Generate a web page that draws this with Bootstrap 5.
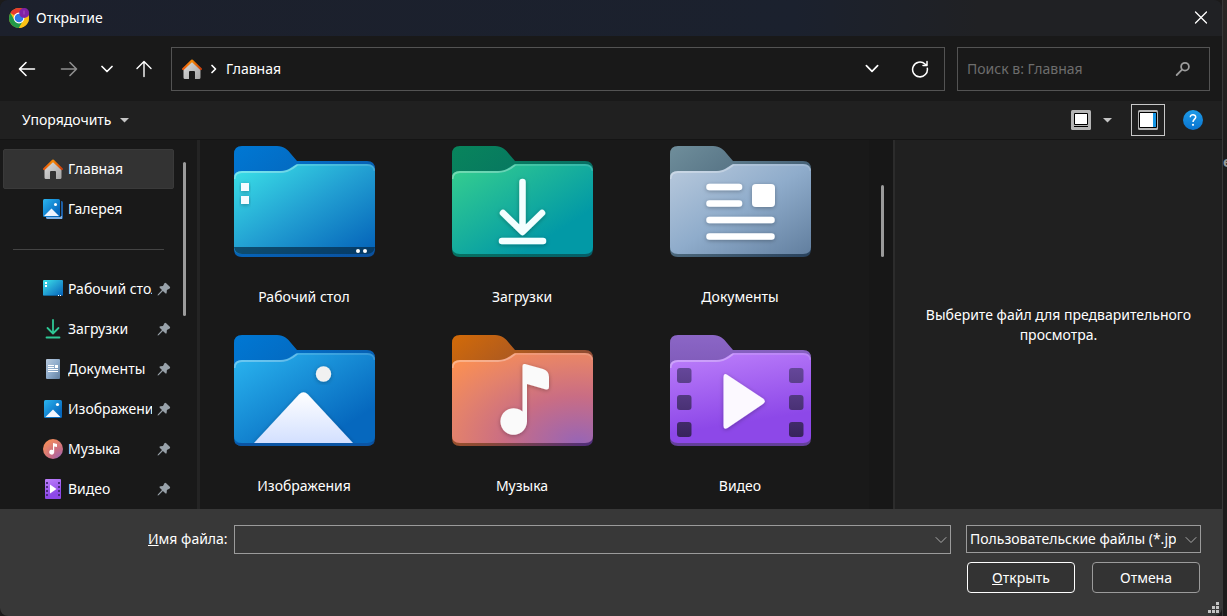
<!DOCTYPE html>
<html lang="ru" data-bs-theme="dark">
<head>
<meta charset="utf-8">
<meta name="viewport" content="width=device-width, initial-scale=1">
<title>Открытие</title>
<link href="https://cdn.jsdelivr.net/npm/bootstrap@5.3.0/dist/css/bootstrap.min.css" rel="stylesheet">
<style>
  body { font-family: "Noto Sans", "Open Sans", sans-serif; font-size: 14px; line-height: 20px; color: #fff; background: #1c1b1b; }
  button { color: inherit; }
  svg { display: block; flex: none; }
  .stroke { fill: none; stroke: currentColor; stroke-linecap: round; stroke-linejoin: round; }
  .dialog { background: #191919; border-radius: 8px; overflow: hidden; }
  .behind { width: 5px; border-left: 1px solid #383838; background: linear-gradient(#292625, #1c1b1b 160px); padding-top: 152px; font-weight: 700; color: #999; overflow: hidden; }
  .titlebar { height: 36px; padding: 0 12px 0 9px; gap: 7px; background: linear-gradient(90deg, #1c202c, #1b212e 65%, #202124 80%); }
  .plain { background: none; border: 0; padding: 0; line-height: inherit; }
  .navrow { height: 65px; padding: 0 12px 0 17px; gap: 22px; }
  .fields { gap: 12px; margin-left: -4px; }
  .field-box { height: 44px; border: 1px solid #535353; }
  .address { padding: 0 15px 0 10px; gap: 8px; }
  .search { width: 253px; padding: 0 18px 0 9px; }
  .search input { background: none; border: 0; outline: 0; width: 100%; padding: 0; color: #fff; }
  .search input::placeholder { color: #6d6d6d; opacity: 1; }
  .tools { height: 38px; background: #202020; padding: 0 19px 0 22px; }
  .view-btn { gap: 12px; margin-right: 19px; }
  .toggle { width: 34px; height: 32px; border: 1px solid #c8c8c8; margin-right: 18px; }
  .panes { border-top: 1px solid #141414; }
  .side { width: 200px; border-right: 3px solid #242424; padding: 9px 0 0 3px; }
  .side .thumb { height: 154px; margin: 13px 0 0 9px; }
  .places { width: 171px; }
  .place { height: 40px; padding: 0 3px 0 40px; gap: 5px; color: #fff; text-decoration: none; }
  .place.current { background: #333; border: 1px solid #3a3a3a; border-radius: 2px; padding-left: 39px; }
  .place span { flex: 1; min-width: 0; overflow: hidden; white-space: nowrap; }
  .divide { height: 40px; padding: 0 10px; }
  .divide hr { margin: 0; border-color: #444; opacity: 1; }
  .thumb { width: 3px; border-radius: 2px; background: #9b9b9b; }
  .tiles { display: grid; grid-template-columns: repeat(3, 1fr); gap: 0 18px; padding: 6px 29px 0 4px; }
  .tile { height: 189px; color: #fff; text-decoration: none; gap: 30px; }
  .tile svg { width: 141px; height: 111px; }
  .rail { width: 24px; padding: 45px 0 0 12px; background: #171717; }
  .rail .thumb { height: 72px; }
  .preview { width: 329px; background: #202020; border-left: 2px solid #2c2c2c; padding: 0 20px; }
  .bottom { height: 107px; background: #383838; padding: 16px 22px 0 148px; }
  .bottom .name-row { margin-right: -1px; }
  .name-row label { margin-right: 6px; }
  .entry { height: 29px; }
  .entry input, .entry select { width: 100%; height: 100%; background: #383838; color: #fff; border: 1px solid #9b9b9b; border-radius: 0; outline: 0; appearance: none; padding: 0 24px 0 3px; }
  .entry select { background: #333; height: 28px; }
  .entry svg { position: absolute; right: 4px; top: 11px; color: #aaa; pointer-events: none; }
  .kinds { width: 235px; margin-left: 15px; }
  .actions { gap: 17px; padding-top: 8px; }
  .dlg-btn { width: 108px; height: 31px; padding: 0; border: 1px solid #9b9b9b; border-radius: 4px; background: #333; }
  .dlg-btn.main { border-color: #fff; }
  .grip { position: absolute; right: 3px; bottom: 3px; }
</style>
</head>
<body>
<svg width="0" height="0" class="position-absolute" aria-hidden="true">
  <defs>
    <linearGradient id="gBlueBack" x1="0" y1="0" x2="1" y2="1"><stop stop-color="#0078d4"/><stop offset="1" stop-color="#0b4f9c"/></linearGradient>
    <linearGradient id="gDesk" x1="0" y1="0" x2="1" y2="1"><stop stop-color="#3ce4e8"/><stop offset=".5" stop-color="#229fd2"/><stop offset="1" stop-color="#0360b8"/></linearGradient>
    <linearGradient id="gGreenBack" x1="0" y1="0" x2="1" y2="1"><stop stop-color="#08855c"/><stop offset="1" stop-color="#055d68"/></linearGradient>
    <linearGradient id="gGreen" x1="0" y1="0" x2="1" y2="1"><stop stop-color="#37d08e"/><stop offset=".75" stop-color="#0299a6"/><stop offset="1" stop-color="#0299a6"/></linearGradient>
    <linearGradient id="gDocBack" x1="0" y1="0" x2="1" y2="1"><stop stop-color="#6f8e9b"/><stop offset="1" stop-color="#28415c"/></linearGradient>
    <linearGradient id="gDoc" x1="0" y1="0" x2="1" y2="1"><stop stop-color="#b9cadd"/><stop offset=".5" stop-color="#8faccb"/><stop offset="1" stop-color="#627f9f"/></linearGradient>
    <linearGradient id="gPic" x1="0" y1="0" x2="1" y2="1"><stop stop-color="#2bb6f0"/><stop offset=".8" stop-color="#0668be"/><stop offset="1" stop-color="#0668be"/></linearGradient>
    <linearGradient id="gMount" x1="0" y1="0" x2="0" y2="1"><stop stop-color="#fff"/><stop offset="1" stop-color="#d3e0ff"/></linearGradient>
    <linearGradient id="gMusBack" x1="0" y1="0" x2="1" y2="1"><stop stop-color="#d36b08"/><stop offset=".6" stop-color="#8c4a35"/><stop offset="1" stop-color="#4e2d7d"/></linearGradient>
    <radialGradient id="gMus" cx=".9" cy="1" r="1.3"><stop stop-color="#9765b6"/><stop offset=".4" stop-color="#c96d84"/><stop offset=".7" stop-color="#e4826b"/><stop offset="1" stop-color="#ff924e"/></radialGradient>
    <linearGradient id="gVidBack" x1="0" y1="0" x2="0" y2="1"><stop stop-color="#8b66c6"/><stop offset="1" stop-color="#633f9a"/></linearGradient>
    <linearGradient id="gVid" x1="0" y1="0" x2=".25" y2="1"><stop stop-color="#bd80fb"/><stop offset=".85" stop-color="#8d48e8"/><stop offset="1" stop-color="#8d48e8"/></linearGradient>
    <linearGradient id="gHole" gradientUnits="userSpaceOnUse" x1="0" y1="33" x2="0" y2="102"><stop stop-color="#65479a"/><stop offset="1" stop-color="#37235c"/></linearGradient>
    <linearGradient id="gHouse" x1="0" y1="0" x2="1" y2="1"><stop stop-color="#dedede"/><stop offset="1" stop-color="#a5a5a5"/></linearGradient>
    <linearGradient id="gRoof" x1="0" y1="0" x2="1" y2="0"><stop stop-color="#e8590c"/><stop offset=".5" stop-color="#f58a07"/><stop offset="1" stop-color="#c8400e"/></linearGradient>
    <linearGradient id="gHelp" x1="0" y1="0" x2="0" y2="1"><stop stop-color="#1d9be8"/><stop offset="1" stop-color="#0a74cf"/></linearGradient>
    <filter id="soft" x="-20%" y="-20%" width="140%" height="140%"><feDropShadow dx="0" dy="1" stdDeviation="2" flood-color="#000" flood-opacity=".3"/></filter>
  </defs>
  <symbol id="back" viewBox="0 0 141 111"><path d="M0 8Q0 0 8 0H43C50 0 54 4 57 8L63 15H133Q141 15 141 23V103Q141 111 133 111H8Q0 111 0 103Z"/></symbol>
  <symbol id="front" viewBox="0 0 141 111">
    <path d="M0 32Q0 25 8 25H46C52 25 55 23 58 21L63 18H133Q141 18 141 26V101Q141 108 133 108H8Q0 108 0 101Z"/>
    <path d="M.5 33Q.5 26 8 26H46C52 26 56 24 59 22L63 19" fill="none" stroke="#fff" stroke-opacity=".3" stroke-width="2"/>
    <path d="M63 19H133Q140 19 140.500 25" fill="none" stroke="#fff" stroke-opacity=".14" stroke-width="2"/>
  </symbol>
  <symbol id="house" viewBox="0 0 20 20"><path d="M1.500 9 10 1.500 18.500 9V18.500Q18.500 20 17 20H13V13Q13 12 12 12H8Q7 12 7 13V20H3Q1.500 20 1.500 18.500Z" fill="url(#gHouse)"/><path d="M1.200 10 10 1.600 18.800 10" fill="none" stroke="url(#gRoof)" stroke-width="2.300" stroke-linecap="round" stroke-linejoin="round"/></symbol>
  <symbol id="pin" viewBox="0 0 14 14"><path d="M7.400 1.200Q8.300.3 9.200 1.200L12.800 4.800Q13.600 5.700 12.700 6.400L9.900 8.100 9.700 10.600Q9.500 12.300 8.300 11.300L5.900 9 1.600 13.200.6 13.400.8 12.400 5 8.100 2.700 5.700Q1.900 4.500 3.400 4.200L6 4Z" fill="#98a1a9"/></symbol>
  <symbol id="down" viewBox="0 0 12 8"><path class="stroke" d="M1 1.500 6 6.500 11 1.500"/></symbol>
</svg>

<div class="d-flex vh-100 overflow-hidden">
<main class="dialog d-flex flex-column flex-grow-1">
  <header class="titlebar d-flex align-items-center flex-shrink-0">
    <svg width="20" height="20" viewBox="0 0 20 20"><circle cx="10" cy="10" r="10" fill="#fbc116"/><path d="M10 10 1.340 5A10 10 0 0 1 18.660 5Z" fill="#e63b2e"/><path d="M1.340 5A10 10 0 0 0 10 20L14.300 12.500 10 10 5.700 12.500Z" fill="#229a48"/><path d="M9 5.500H18.900A10 10 0 0 1 10 20L14.300 12.500Z" fill="#fbc116"/><circle cx="10" cy="10" r="5.400" fill="#fff"/><circle cx="10" cy="10" r="4.300" fill="#2f78e6"/><circle cx="15.200" cy="5" r="5" fill="#8121a5"/><path d="M15 2.500V6.500" stroke="#a757c6"/></svg>
    <span class="me-auto">Открытие</span>
    <button class="plain" aria-label="Закрыть"><svg class="stroke" width="18" height="18" viewBox="0 0 18 18" stroke-width="1.300"><path d="M3.500 3 14.500 14M14.500 3 3.500 14"/></svg></button>
  </header>

  <nav class="navrow d-flex align-items-center flex-shrink-0">
    <button class="plain" aria-label="Назад"><svg class="stroke" width="20" height="20" viewBox="0 0 20 20" stroke-width="1.600"><path d="M17.500 10H2.500M9 3.500 2.500 10 9 16.500"/></svg></button>
    <button class="plain" aria-label="Вперёд"><svg class="stroke" width="20" height="20" viewBox="0 0 20 20" stroke-width="1.600" color="#8f8f8f"><path d="M2.500 10H17.500M11 3.500 17.500 10 11 16.500"/></svg></button>
    <button class="plain" aria-label="Последние расположения"><svg width="12" height="8" stroke-width="1.700"><use href="#down"/></svg></button>
    <button class="plain" aria-label="Вверх"><svg class="stroke" width="18" height="20" viewBox="0 0 18 20" stroke-width="1.400"><path d="M9 17.500V2.500M2 9.500 9 2.500 16 9.500"/></svg></button>
    <div class="fields d-flex flex-grow-1">
      <div class="field-box address d-flex align-items-center flex-grow-1">
        <svg width="20" height="20"><use href="#house"/></svg>
        <svg class="stroke" width="8" height="10" viewBox="0 0 8 10" stroke-width="1.700"><path d="M2 1.500 5.500 5 2 8.500"/></svg>
        <a href="#" class="text-white text-decoration-none me-auto">Главная</a>
        <button class="plain me-4" aria-label="Список адресов"><svg width="14" height="9" stroke-width="1.500"><use href="#down"/></svg></button>
        <button class="plain" aria-label="Обновить"><svg class="stroke" width="18" height="18" viewBox="0 0 18 18" stroke-width="1.500"><path d="M16.300 8.200A7.400 7.400 0 1 1 14 4L15.700 5.200M16 1.500V5.500H12"/></svg></button>
      </div>
      <label class="field-box search d-flex align-items-center">
        <input type="search" aria-label="Поиск" placeholder="Поиск в: Главная">
        <svg class="stroke" width="16" height="16" viewBox="0 0 16 16" color="#9b9b9b" stroke-width="1.800"><circle cx="10" cy="5.700" r="3.900"/><path d="M7 8.700 1.700 14"/></svg>
      </label>
    </div>
  </nav>

  <div class="tools d-flex align-items-center flex-shrink-0">
    <button class="plain d-flex align-items-center me-auto gap-2">Упорядочить <svg width="9" height="5"><path d="M0 0H9L4.500 4.500Z" fill="#c5c5c5"/></svg></button>
    <button class="plain view-btn d-flex align-items-center" aria-label="Вид"><svg width="20" height="20"><rect width="20" height="20" rx="1.500" fill="#b5b5b5"/><path d="M3.500 3.500H16.500V14.500H3.500Z" fill="#fff" stroke="#000"/><path d="M3 16.500H17" stroke="#000"/></svg><svg width="9" height="5"><path d="M0 0H9L4.500 4.500Z" fill="#c5c5c5"/></svg></button>
    <button class="plain toggle d-flex align-items-center justify-content-center" aria-label="Область просмотра"><svg width="20" height="20"><rect width="20" height="20" rx="1.500" fill="#b5b5b5"/><path d="M1.500 2.500H18.500V17.500H1.500Z" fill="#fff" stroke="#000"/><path d="M15 3H18V17H15Z" fill="#1495e4"/></svg></button>
    <button class="plain" aria-label="Справка"><svg width="20" height="20"><circle cx="10" cy="10" r="10" fill="url(#gHelp)"/><path d="M7.300 7.300C7.300 3.700 12.800 3.900 12.700 7.200 12.600 9 10 9.400 10 12" fill="none" stroke="#fff" stroke-width="1.500"/><circle cx="10" cy="14.800" r="1.100" fill="#fff"/></svg></button>
  </div>

  <div class="panes d-flex flex-grow-1 overflow-hidden">
    <aside class="side d-flex flex-shrink-0">
      <div class="places">
        <a href="#" class="place current d-flex align-items-center"><svg width="20" height="20"><use href="#house"/></svg><span>Главная</span></a>
        <a href="#" class="place d-flex align-items-center"><svg width="20" height="20"><rect x="3" y="2" width="17" height="18" rx="1.500" fill="#1d5fa6"/><path d="M3 17H19V20H4.500Q3 20 3 18Z" fill="#7fb0e4"/><rect width="18" height="18" rx="1.500" fill="#191919"/><rect width="17" height="18" rx="1.500" fill="url(#gPic)"/><path d="M1 17 8.500 9.500 16 17Z" fill="#eef4ff"/><circle cx="12.500" cy="5.500" r="1.500" fill="#fff"/></svg><span>Галерея</span></a>
        <div class="divide d-flex align-items-center"><hr class="w-100"></div>
        <a href="#" class="place d-flex align-items-center"><svg width="20" height="20"><rect y="1" width="20" height="16" rx="1" fill="url(#gDesk)"/><path d="M2 3H4V5H2ZM2 6H4V8H2Z" fill="#fff"/><path d="M0 16H20V17H0Z" fill="#08375d" opacity=".5"/><path d="M15 16H16V17H15ZM17 16H18V17H17Z" fill="#fff"/></svg><span>Рабочий стол</span><svg width="14" height="14"><use href="#pin"/></svg></a>
        <a href="#" class="place d-flex align-items-center"><svg class="stroke" width="20" height="20" color="#2fc795" stroke-width="1.800"><path d="M10 1V14M4.500 9 10 14.500 15.500 9M3.500 18.500H16.500"/></svg><span>Загрузки</span><svg width="14" height="14"><use href="#pin"/></svg></a>
        <a href="#" class="place d-flex align-items-center"><svg width="20" height="20"><rect x="3" width="14" height="20" rx="1" fill="url(#gDoc)"/><path d="M5 6.500H11M5 8.500H11M5 10.500H15M5 12.500H15" stroke="#fff"/><path d="M12 6H15V9H12Z" fill="#fff"/></svg><span>Документы</span><svg width="14" height="14"><use href="#pin"/></svg></a>
        <a href="#" class="place d-flex align-items-center"><svg width="20" height="20"><rect x="1" y="1" width="18" height="18" rx="1.500" fill="url(#gPic)"/><path d="M2.500 18 10 10.500 17.500 18Z" fill="#f2f6ff"/><circle cx="14.500" cy="5.500" r="1.600" fill="#fff"/></svg><span>Изображения</span><svg width="14" height="14"><use href="#pin"/></svg></a>
        <a href="#" class="place d-flex align-items-center"><svg width="20" height="20"><circle cx="10" cy="10" r="10" fill="url(#gMus)"/><path d="M10 4 14 5V8L11.200 7.500V13A2.500 2.500 0 1 1 10 11Z" fill="#fff"/></svg><span>Музыка</span><svg width="14" height="14"><use href="#pin"/></svg></a>
        <a href="#" class="place d-flex align-items-center"><svg width="20" height="20"><rect x="2" width="16" height="20" rx="1" fill="url(#gVid)"/><path d="M3 3H5V5H3ZM3 7H5V9H3ZM3 11H5V13H3ZM3 15H5V17H3ZM15 3H17V5H15ZM15 7H17V9H15ZM15 11H17V13H15ZM15 15H17V17H15Z" fill="#4b2c80"/><path d="M7 5.500 13.500 10 7 14.500Z" fill="#fff"/></svg><span>Видео</span><svg width="14" height="14"><use href="#pin"/></svg></a>
      </div>
      <div class="thumb"></div>
    </aside>

    <section class="d-flex flex-grow-1 overflow-hidden">
      <div class="tiles flex-grow-1">
        <a href="#" class="tile d-flex flex-column align-items-center"><svg viewBox="0 0 141 111"><use href="#back" fill="url(#gBlueBack)"/><use href="#front" fill="url(#gDesk)"/><path d="M0 101H141Q140 108 133 108H8Q1 108 0 101Z" fill="#062a44" opacity=".7"/><path d="M7 37H15V45H7ZM7 50H15V58H7Z" fill="#f4fbff" filter="url(#soft)"/><circle cx="124" cy="105" r="2" fill="#fff"/><circle cx="131" cy="105" r="2" fill="#fff"/></svg><span>Рабочий стол</span></a>
        <a href="#" class="tile d-flex flex-column align-items-center"><svg viewBox="0 0 141 111"><use href="#back" fill="url(#gGreenBack)"/><use href="#front" fill="url(#gGreen)"/><path d="M70.500 36V84M51 67 70.500 86 90 67M50 95H91" fill="none" stroke="#f4ffff" stroke-width="6.500" stroke-linecap="round" stroke-linejoin="round" filter="url(#soft)"/></svg><span>Загрузки</span></a>
        <a href="#" class="tile d-flex flex-column align-items-center"><svg viewBox="0 0 141 111"><use href="#back" fill="url(#gDocBack)"/><use href="#front" fill="url(#gDoc)"/><g filter="url(#soft)"><path d="M39.500 41H69M39.500 57.500H69M39.500 74H101.500M39.500 90.500H101.500" stroke="#fff" stroke-width="6.500" stroke-linecap="round"/><rect x="82" y="38" width="23" height="23" rx="4" fill="#fff"/></g></svg><span>Документы</span></a>
        <a href="#" class="tile d-flex flex-column align-items-center"><svg viewBox="0 0 141 111"><use href="#back" fill="url(#gBlueBack)"/><use href="#front" fill="url(#gPic)"/><path d="M20 108 65 59.500Q69.500 55 74 59.500L119 108Z" fill="url(#gMount)" filter="url(#soft)"/><circle cx="89.500" cy="39" r="7.700" fill="#f1f1f1" filter="url(#soft)"/><path d="M1 108H140Q137 111 133 111H8Q4 111 1 108Z" fill="#0b55a4"/></svg><span>Изображения</span></a>
        <a href="#" class="tile d-flex flex-column align-items-center"><svg viewBox="0 0 141 111"><use href="#back" fill="url(#gMusBack)"/><use href="#front" fill="url(#gMus)"/><path d="M70.500 31Q70.500 28.500 73 29L91 34Q97 36 97 42V52Q97 55 94 54.500L75 49V86.500A13.300 13.300 0 1 1 70.500 76.500Z" fill="#fafafa" filter="url(#soft)"/></svg><span>Музыка</span></a>
        <a href="#" class="tile d-flex flex-column align-items-center"><svg viewBox="0 0 141 111"><use href="#back" fill="url(#gVidBack)"/><use href="#front" fill="url(#gVid)"/><g fill="url(#gHole)"><rect x="7" y="33" width="14.500" height="15" rx="3"/><rect x="7" y="60" width="14.500" height="15" rx="3"/><rect x="7" y="87" width="14.500" height="15" rx="3"/><rect x="119" y="33" width="14.500" height="15" rx="3"/><rect x="119" y="60" width="14.500" height="15" rx="3"/><rect x="119" y="87" width="14.500" height="15" rx="3"/></g><path d="M53.500 42Q53.500 37.500 57.500 40L93 63.500Q96.500 66 93 69L57.500 93Q53.500 95 53.500 91Z" fill="#fcf9ff" filter="url(#soft)"/></svg><span>Видео</span></a>
      </div>
      <div class="rail"><div class="thumb"></div></div>
    </section>

    <aside class="preview d-flex flex-shrink-0 align-items-center justify-content-center text-center">Выберите файл для предварительного просмотра.</aside>
  </div>

  <form class="bottom position-relative flex-shrink-0">
    <div class="name-row d-flex">
      <label for="fname" class="pt-1 text-nowrap"><u>И</u>мя файла:</label>
      <div class="entry position-relative flex-grow-1"><input id="fname" type="text"><svg width="12" height="8"><use href="#down"/></svg></div>
      <div class="entry kinds position-relative flex-shrink-0"><select aria-label="Тип файлов"><option>Пользовательские файлы (*.jpg;*.png)</option></select><svg width="12" height="8"><use href="#down"/></svg></div>
    </div>
    <div class="actions d-flex justify-content-end">
      <button type="button" class="dlg-btn main"><u>О</u>ткрыть</button>
      <button type="button" class="dlg-btn">Отмена</button>
    </div>
    <svg class="grip" width="12" height="12" fill="#c4c4c4"><path d="M9 1H12V4H9ZM5 5H8V8H5ZM9 5H12V8H9ZM1 9H4V12H1ZM5 9H8V12H5ZM9 9H12V12H9Z"/></svg>
  </form>
</main>
<div class="behind flex-shrink-0" aria-hidden="true">е</div>
</div>
<script src="https://cdn.jsdelivr.net/npm/bootstrap@5.3.0/dist/js/bootstrap.bundle.min.js"></script>
</body>
</html>
